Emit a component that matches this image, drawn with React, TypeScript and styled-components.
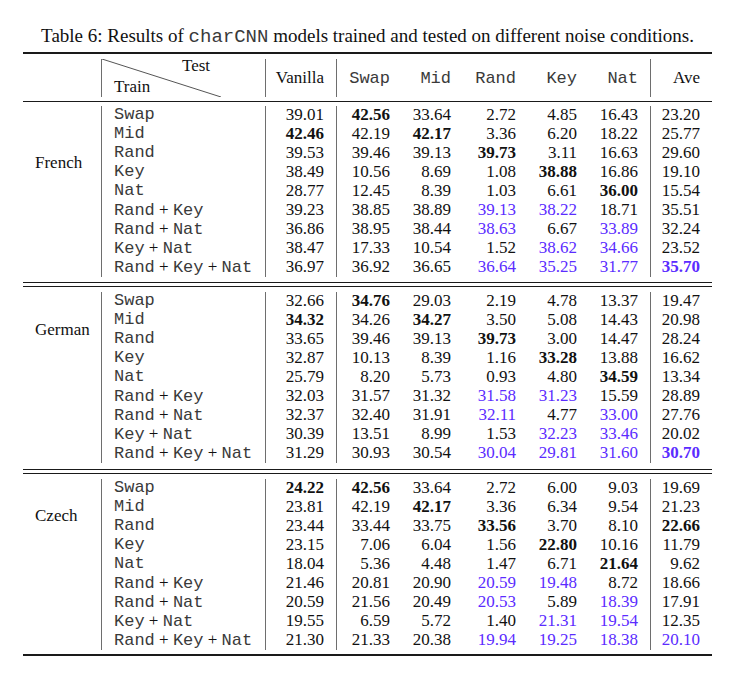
import React from "react";
import styled, { createGlobalStyle } from "styled-components";

const GlobalStyle = createGlobalStyle`
  html, body { margin: 0; padding: 0; background: #ffffff; }
  body {
    font-family: "Liberation Serif", "Times New Roman", serif;
    color: #111111;
  }
`;

const COLS = "79px 164px 71px 65px 61px 65px 61px 62px 61px";
const BLUE = "#5b2cff";
const RULE = "#1a1a1a";
const VLINE = "#6e6e6e";
const MONO_INK = "#3a3a3a";

const Page = styled.div`
  width: 689px;
  padding-left: 23px;
`;

const Caption = styled.div`
  padding-top: 25px;
  margin-bottom: 5px;
  height: 22px;
  line-height: 22px;
  font-size: 19px;
  text-align: center;
  white-space: nowrap;
`;

const Mono = styled.span`
  font-family: "Liberation Mono", "Courier New", monospace;
  color: ${MONO_INK};
`;

const Table = styled.div`
  border-top: 2px solid ${RULE};
  border-bottom: 2px solid ${RULE};
  font-size: 17px;
`;

const HeaderSection = styled.div`
  padding: 5px 0 4px;
  border-bottom: 1px solid ${RULE};
`;

const Grid = styled.div`
  display: grid;
  grid-template-columns: ${COLS};
`;

const HeaderGrid = styled(Grid)`
  height: 38px;
`;

const HeadCell = styled.div<{ $divider?: boolean; $mono?: boolean }>`
  display: flex;
  align-items: center;
  justify-content: flex-end;
  padding-right: 12px;
  border-right: ${(p) => (p.$divider ? `1px solid ${VLINE}` : "none")};
  color: ${(p) => (p.$mono ? MONO_INK : "#111111")};
  font-family: ${(p) =>
    p.$mono
      ? `"Liberation Mono", "Courier New", monospace`
      : `"Liberation Serif", "Times New Roman", serif`};
`;

const SlashCell = styled.div`
  position: relative;
  display: flex;
  flex-direction: column;
  justify-content: space-between;
  padding-bottom: 3px;
  border-right: 1px solid ${VLINE};
  line-height: 14px;
`;

const SlashSvg = styled.svg`
  position: absolute;
  left: 0;
  top: 0;
  width: 164px;
  height: 38px;
  pointer-events: none;
`;

const SlashLabel = styled.span<{ $indent: number }>`
  padding-left: ${(p) => p.$indent}px;
`;

const Section = styled(Grid)<{ $top: number; $bottom: number }>`
  grid-auto-rows: 19px;
  padding-top: ${(p) => p.$top}px;
  padding-bottom: ${(p) => p.$bottom}px;
`;

const DoubleRule = styled.div`
  height: 3px;
  border-top: 1px solid ${RULE};
  border-bottom: 1px solid ${RULE};
`;

const LangCell = styled.div<{ $offset: number }>`
  grid-column: 1;
  grid-row: 1 / span 9;
  padding-top: ${(p) => p.$offset}px;
  padding-left: 12px;
  line-height: 19px;
  border-right: 1px solid ${VLINE};
`;

const TrainCell = styled.div`
  grid-column: 2;
  padding-left: 12px;
  line-height: 18px;
  white-space: nowrap;
  border-right: 1px solid ${VLINE};
  color: ${MONO_INK};
  font-family: "Liberation Mono", "Courier New", monospace;
`;

const Plus = styled.span`
  font-family: "Liberation Serif", "Times New Roman", serif;
  color: #111111;
`;

const ValueCell = styled.div<{ $bold?: boolean; $blue?: boolean; $divider?: boolean }>`
  text-align: right;
  padding-right: 12px;
  line-height: 18px;
  font-weight: ${(p) => (p.$bold ? 700 : 400)};
  color: ${(p) => (p.$blue ? BLUE : "#111111")};
  border-right: ${(p) => (p.$divider ? `1px solid ${VLINE}` : "none")};
`;

type Lang = {
  name: string;
  offset: number;
  top: number;
  bottom: number;
  rows: string[][];
};

const TRAIN = ["Swap", "Mid", "Rand", "Key", "Nat", "Rand+Key", "Rand+Nat", "Key+Nat", "Rand+Key+Nat"];

const LANGS: Lang[] = [
  {
    name: "French",
    offset: 47,
    top: 4,
    bottom: 5,
    rows: [
      ["39.01", "*42.56", "33.64", "2.72", "4.85", "16.43", "23.20"],
      ["*42.46", "42.19", "*42.17", "3.36", "6.20", "18.22", "25.77"],
      ["39.53", "39.46", "39.13", "*39.73", "3.11", "16.63", "29.60"],
      ["38.49", "10.56", "8.69", "1.08", "*38.88", "16.86", "19.10"],
      ["28.77", "12.45", "8.39", "1.03", "6.61", "*36.00", "15.54"],
      ["39.23", "38.85", "38.89", "~39.13", "~38.22", "18.71", "35.51"],
      ["36.86", "38.95", "38.44", "~38.63", "6.67", "~33.89", "32.24"],
      ["38.47", "17.33", "10.54", "1.52", "~38.62", "~34.66", "23.52"],
      ["36.97", "36.92", "36.65", "~36.64", "~35.25", "~31.77", "*~35.70"],
    ],
  },
  {
    name: "German",
    offset: 28,
    top: 5,
    bottom: 6,
    rows: [
      ["32.66", "*34.76", "29.03", "2.19", "4.78", "13.37", "19.47"],
      ["*34.32", "34.26", "*34.27", "3.50", "5.08", "14.43", "20.98"],
      ["33.65", "39.46", "39.13", "*39.73", "3.00", "14.47", "28.24"],
      ["32.87", "10.13", "8.39", "1.16", "*33.28", "13.88", "16.62"],
      ["25.79", "8.20", "5.73", "0.93", "4.80", "*34.59", "13.34"],
      ["32.03", "31.57", "31.32", "~31.58", "~31.23", "15.59", "28.89"],
      ["32.37", "32.40", "31.91", "~32.11", "4.77", "~33.00", "27.76"],
      ["30.39", "13.51", "8.99", "1.53", "~32.23", "~33.46", "20.02"],
      ["31.29", "30.93", "30.54", "~30.04", "~29.81", "~31.60", "*~30.70"],
    ],
  },
  {
    name: "Czech",
    offset: 27,
    top: 5,
    bottom: 4,
    rows: [
      ["*24.22", "*42.56", "33.64", "2.72", "6.00", "9.03", "19.69"],
      ["23.81", "42.19", "*42.17", "3.36", "6.34", "9.54", "21.23"],
      ["23.44", "33.44", "33.75", "*33.56", "3.70", "8.10", "*22.66"],
      ["23.15", "7.06", "6.04", "1.56", "*22.80", "10.16", "11.79"],
      ["18.04", "5.36", "4.48", "1.47", "6.71", "*21.64", "9.62"],
      ["21.46", "20.81", "20.90", "~20.59", "~19.48", "8.72", "18.66"],
      ["20.59", "21.56", "20.49", "~20.53", "5.89", "~18.39", "17.91"],
      ["19.55", "6.59", "5.72", "1.40", "~21.31", "~19.54", "12.35"],
      ["21.30", "21.33", "20.38", "~19.94", "~19.25", "~18.38", "~20.10"],
    ],
  },
];

function TrainLabel({ text }: { text: string }) {
  const parts = text.split("+");
  return (
    <>
      {parts.map((p, i) => (
        <React.Fragment key={i}>
          {i > 0 && <Plus> + </Plus>}
          {p}
        </React.Fragment>
      ))}
    </>
  );
}

function Value({ raw, divider }: { raw: string; divider?: boolean }) {
  const bold = raw.includes("*");
  const blue = raw.includes("~");
  const text = raw.replace(/[*~]/g, "");
  return (
    <ValueCell $bold={bold} $blue={blue} $divider={divider}>
      {text}
    </ValueCell>
  );
}

function LangSection({ lang }: { lang: Lang }) {
  return (
    <Section $top={lang.top} $bottom={lang.bottom}>
      <LangCell $offset={lang.offset}>{lang.name}</LangCell>
      {lang.rows.map((row, r) => (
        <React.Fragment key={r}>
          <TrainCell style={{ gridRow: r + 1 }}>
            <TrainLabel text={TRAIN[r]} />
          </TrainCell>
          {row.map((v, c) => (
            <Value key={c} raw={v} divider={c === 0 || c === 5} />
          ))}
        </React.Fragment>
      ))}
    </Section>
  );
}

export default function App() {
  return (
    <>
      <GlobalStyle />
      <Page>
        <Caption>
          Table 6: Results of <Mono>charCNN</Mono> models trained and tested on different noise conditions.
        </Caption>
        <Table>
          <HeaderSection>
            <HeaderGrid>
              <HeadCell $divider />
              <SlashCell>
                <SlashSvg viewBox="0 0 164 38" preserveAspectRatio="none">
                  <line x1="0" y1="0" x2="119" y2="38" stroke="#555" strokeWidth="1" />
                </SlashSvg>
                <SlashLabel $indent={80}>Test</SlashLabel>
                <SlashLabel $indent={12}>Train</SlashLabel>
              </SlashCell>
              <HeadCell $divider>Vanilla</HeadCell>
              <HeadCell $mono>Swap</HeadCell>
              <HeadCell $mono>Mid</HeadCell>
              <HeadCell $mono>Rand</HeadCell>
              <HeadCell $mono>Key</HeadCell>
              <HeadCell $mono $divider>Nat</HeadCell>
              <HeadCell>Ave</HeadCell>
            </HeaderGrid>
          </HeaderSection>
          <LangSection lang={LANGS[0]} />
          <DoubleRule />
          <LangSection lang={LANGS[1]} />
          <DoubleRule />
          <LangSection lang={LANGS[2]} />
        </Table>
      </Page>
    </>
  );
}
